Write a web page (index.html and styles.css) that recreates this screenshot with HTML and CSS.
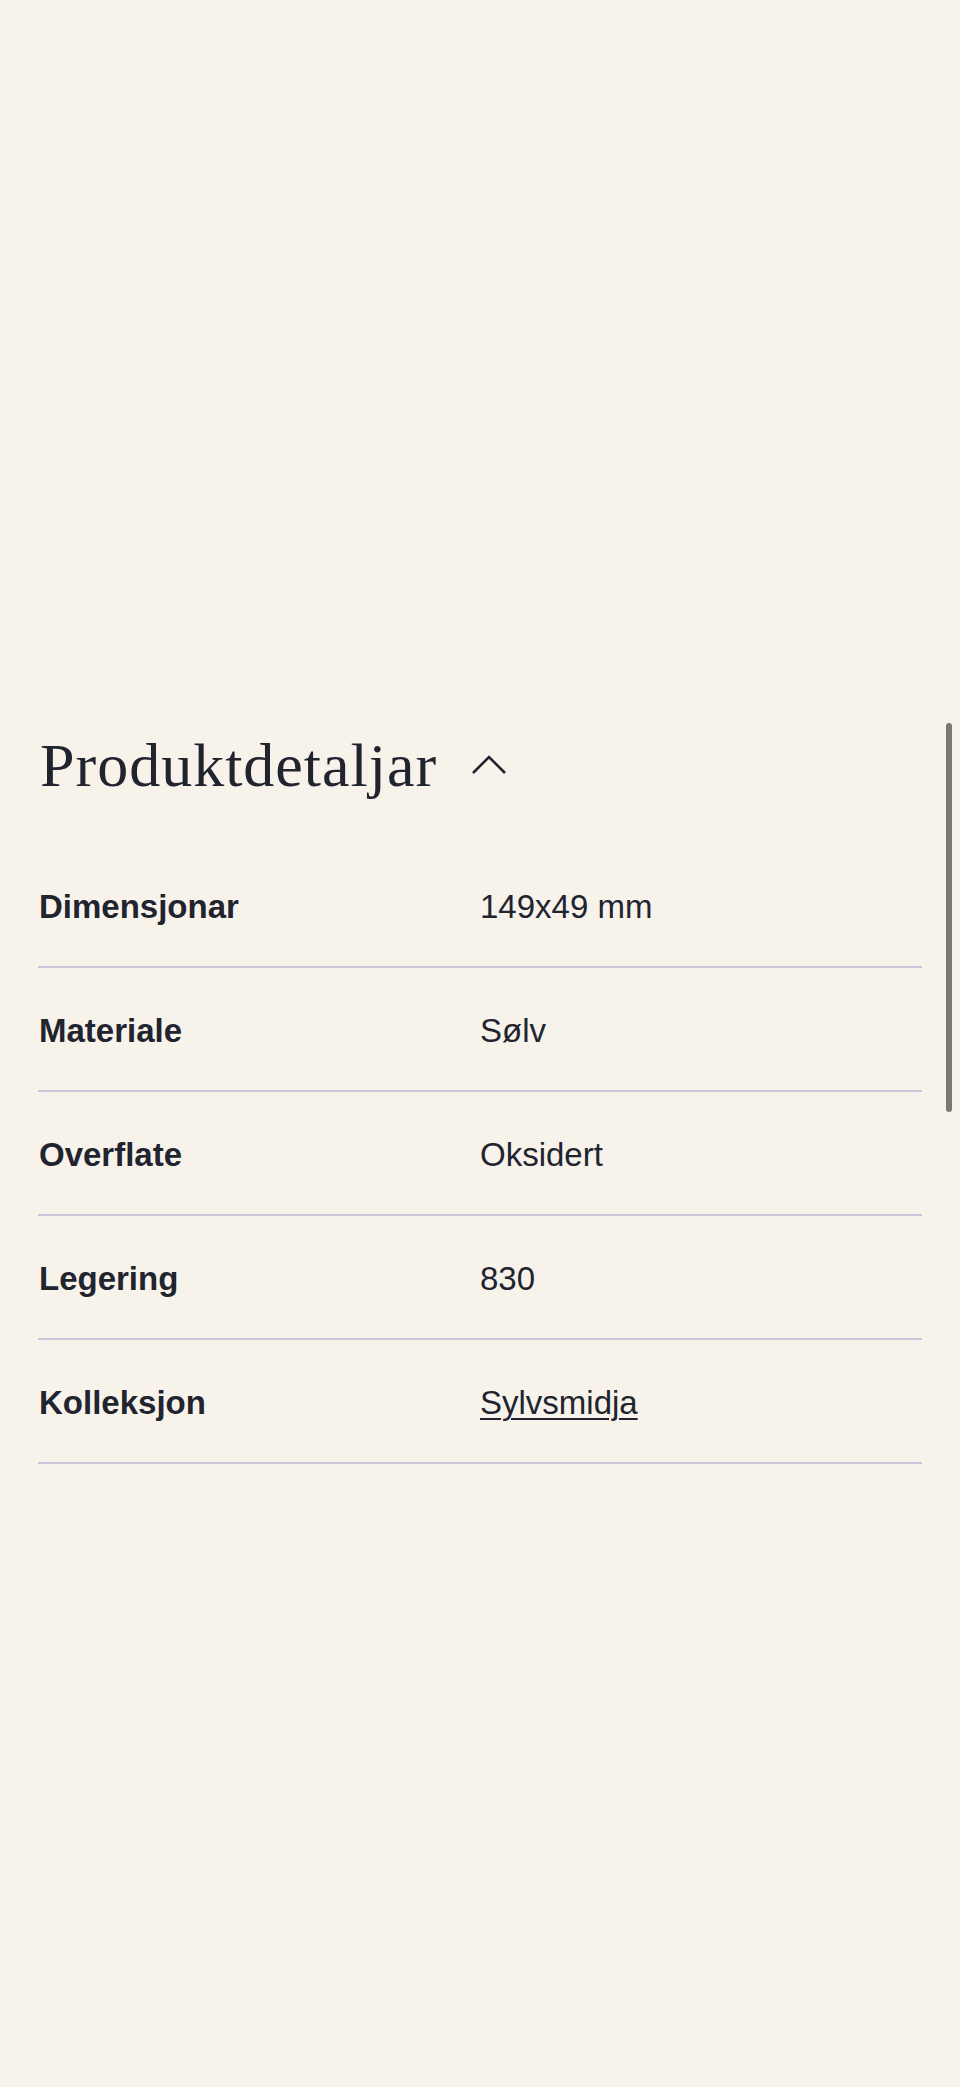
FILE: index.html
```html
<!DOCTYPE html>
<html lang="nn">
<head>
    <meta charset="UTF-8">
    <meta name="viewport" content="width=device-width, initial-scale=1.0">
    <title>Produktdetaljar</title>
    <link rel="stylesheet" href="styles.css">
</head>
<body>
    <main class="page">
        <section class="details">
            <h2 class="details-title">
                Produktdetaljar
                <svg class="chevron" width="36" height="20" viewBox="0 0 36 20" aria-hidden="true">
                    <polyline points="2,18 18,2 34,18" fill="none" stroke="currentColor" stroke-width="2.6"/>
                </svg>
            </h2>

            <dl class="spec-list">
                <div class="spec-row">
                    <dt>Dimensjonar</dt>
                    <dd>149x49 mm</dd>
                </div>
                <div class="spec-row">
                    <dt>Materiale</dt>
                    <dd>Sølv</dd>
                </div>
                <div class="spec-row">
                    <dt>Overflate</dt>
                    <dd>Oksidert</dd>
                </div>
                <div class="spec-row">
                    <dt>Legering</dt>
                    <dd>830</dd>
                </div>
                <div class="spec-row">
                    <dt>Kolleksjon</dt>
                    <dd><a href="#">Sylvsmidja</a></dd>
                </div>
            </dl>
        </section>
    </main>

    <div class="scroll-thumb"></div>
</body>
</html>
```

FILE: styles.css
```css
/* General */
html, body {
    margin: 0;
    padding: 0;
}

body {
    background-color: #f7f3eb;
    color: #21242f;
    font-family: 'Liberation Sans', Arial, sans-serif;
    min-height: 2087px;
}

.page {
    padding: 728px 38px 0;
}

/* Heading */
.details-title {
    margin: 0 0 42px;
    font-family: 'Liberation Serif', 'Times New Roman', serif;
    font-weight: 400;
    font-size: 62px;
    line-height: 74px;
    letter-spacing: 1px;
    padding-left: 2px;
    display: flex;
    align-items: center;
    gap: 34px;
}

.chevron {
    margin-top: 0;
}

/* Spec list */
.spec-list {
    margin: 0;
}

.spec-row {
    display: grid;
    grid-template-columns: 1fr 1fr;
    padding: 43px 0 39px;
    border-bottom: 2px solid #c9c7d9;
    font-size: 33px;
    line-height: 40px;
}

.spec-row dt {
    font-weight: 700;
    padding-left: 1px;
}

.spec-row dd {
    margin: 0;
}

.spec-row a {
    color: inherit;
    text-decoration: underline;
    text-decoration-thickness: 2px;
    text-underline-offset: 4px;
}

/* Overlay scrollbar */
.scroll-thumb {
    position: absolute;
    top: 723px;
    right: 8px;
    width: 6px;
    height: 389px;
    border-radius: 3px;
    background-color: #787874;
}
```
